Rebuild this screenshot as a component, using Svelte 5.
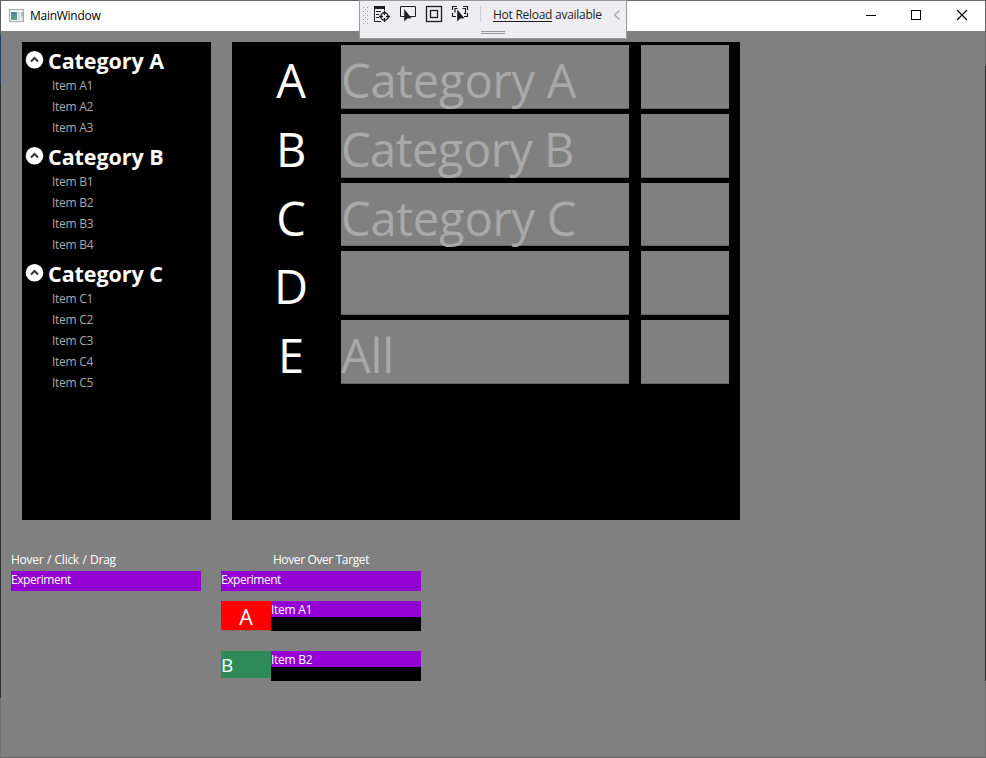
<script>
  const categories = [
    { name: 'Category A', items: ['Item A1', 'Item A2', 'Item A3'] },
    { name: 'Category B', items: ['Item B1', 'Item B2', 'Item B3', 'Item B4'] },
    { name: 'Category C', items: ['Item C1', 'Item C2', 'Item C3', 'Item C4', 'Item C5'] }
  ];
  const slots = [
    { key: 'A', label: 'Category A' },
    { key: 'B', label: 'Category B', tight: true },
    { key: 'C', label: 'Category C' },
    { key: 'D', label: '' },
    { key: 'E', label: 'All' }
  ];
</script>

<div class="window">
  <header class="titlebar">
    <svg class="appicon" width="16" height="14" viewBox="0 0 16 14">
      <defs>
        <linearGradient id="pane" x1="0" y1="0" x2="0.4" y2="1">
          <stop offset="0" stop-color="#4a7fa8" />
          <stop offset="1" stop-color="#58a878" />
        </linearGradient>
      </defs>
      <rect x="0.5" y="0.5" width="14" height="12" fill="#f4f5f7" stroke="#a3a9b2" />
      <rect x="2" y="3" width="6" height="8" fill="url(#pane)" />
      <rect x="9" y="3" width="2" height="8" fill="#d5dbe2" />
      <rect x="12" y="3" width="2" height="4" fill="#9dbccb" />
      <rect x="12" y="7" width="2" height="4" fill="#d5dbe2" />
    </svg>
    <span class="title">MainWindow</span>
    <div class="controls">
      <svg width="46" height="30" viewBox="0 0 46 30"><path d="M18 14.5h10" stroke="#000" /></svg>
      <svg width="46" height="30" viewBox="0 0 46 30"><rect x="17.5" y="9.5" width="9" height="9" fill="none" stroke="#000" /></svg>
      <svg width="46" height="30" viewBox="0 0 46 30"><path d="M17 9l10 10M27 9L17 19" stroke="#000" stroke-width="1.1" /></svg>
    </div>
  </header>

  <main>
    <div class="top">
      <section class="tree">
        {#each categories as cat}
          <div class="head">
            <svg width="19" height="19" viewBox="0 0 19 19">
              <circle cx="9.5" cy="9.8" r="8.8" fill="#fff" />
              <path d="M6 11.500l3.500-3.500 3.500 3.500" fill="none" stroke="#333" stroke-width="2" />
            </svg>
            <span>{cat.name}</span>
          </div>
          {#each cat.items as item}
            <div class="item">{item}</div>
          {/each}
        {/each}
      </section>

      <section class="slots">
        {#each slots as slot}
          <div class="row">
            <div class="key">{slot.key}</div>
            <div class="cell wide" class:tight={slot.tight}>{slot.label}</div>
            <div class="cell small"></div>
          </div>
        {/each}
      </section>
    </div>

    <div class="bottom">
      <div class="source">
        <div class="caption spaced">Hover / Click / Drag</div>
        <div class="exp">Experiment</div>
      </div>
      <div class="target">
        <div class="caption center">Hover Over Target</div>
        <div class="exp">Experiment</div>
        <div class="drop">
          <div class="tag red">A</div>
          <div class="body"><div>Item A1</div></div>
        </div>
        <div class="drop">
          <div class="tag green">B</div>
          <div class="body"><div>Item B2</div></div>
        </div>
      </div>
    </div>
  </main>

  <div class="debugbar">
    <svg class="tools" width="132" height="29" viewBox="0 0 132 29">
      <g fill="#9a9aa0">
        {#each [6, 10, 14, 18, 22] as y}
          <rect x="3" {y} width="1" height="1" /><rect x="7" {y} width="1" height="1" />
          {#if y < 22}<rect x="5" y={y + 2} width="1" height="1" />{/if}
        {/each}
      </g>
      <g fill="none" stroke="#1e1e1e">
        <path d="M14 5h11v3H14z" fill="#1e1e1e" stroke="none" />
        <path d="M14.500 7v13.500H21M24.500 7v2.500M16 10.500h5M16 13.500h3M16 16.500h3" />
        <circle cx="24.500" cy="15.500" r="3.700" stroke-width="1.400" />
        <path d="M24.500 10v4M24.500 17v4M19 15.500h4M26 15.500h4" stroke-width="1.300" />
        <path d="M45 15.500H40.500V5.500h15v10H50" />
        <path d="M44.200 8v12.500l3-3 4.300-.3z" fill="#1e1e1e" stroke="none" />
        <rect x="66.500" y="5.500" width="15" height="15" stroke-width="1.300" />
        <rect x="70.500" y="9.500" width="7" height="7" stroke-width="1.300" />
        <path d="M92.500 9V5.500H97M103 5.500h4.500V9M92.500 12v3.500H96M107.500 12v3.500H104" stroke-width="1.200" />
        <path d="M95 11.500V7.500h2.500M102.500 7.500h3v5H104" stroke-width="1.200" />
        <path d="M97.200 8.500v12l3-3 4.300-.3z" fill="#1e1e1e" stroke="none" />
      </g>
      <path d="M120.500 5v16" stroke="#cccedb" />
    </svg>
    <div class="reload"><u>Hot Reload</u> available</div>
    <svg class="chev" width="8" height="29" viewBox="0 0 8 29"><path d="M6.500 9.500L1.500 14l5 4.500" fill="none" stroke="#a5a5a8" stroke-width="1.200" /></svg>
    <div class="grip"></div>
  </div>
</div>

<style>
  :global(body) { margin: 0; }
  .window {
    position: relative;
    box-sizing: border-box;
    width: 986px;
    height: 758px;
    padding: 1px;
    background:
      linear-gradient(#5b5b5b 0 35px, #1d4266 35px 83px, #303030 83px 698px, #707070 698px) 0 0 / 1px 757px no-repeat,
      linear-gradient(#666 0 66px, #2b2b2b 66px 681px, #6e6e6e 681px) 985px 0 / 1px 757px no-repeat,
      #666;
    font: 12px/16px "Open Sans", "Noto Sans", sans-serif;
    letter-spacing: -0.27px;
    color: #fff;
    overflow: hidden;
  }
  .titlebar {
    display: flex;
    align-items: center;
    height: 30px;
    padding-left: 8px;
    background: #fff;
    color: #000;
  }
  .title { margin-left: 5px; }
  .controls { display: flex; margin-left: auto; margin-right: -1px; }
  main { height: 726px; background: #808080; }
  .top { display: flex; gap: 21px; padding: 11px 0 0 21px; }
  .tree, .slots {
    box-sizing: border-box;
    height: 478px;
    background: #000;
    box-shadow: 0 0 0 1px #7a8087;
  }
  .tree { width: 189px; }
  .head {
    display: flex;
    height: 33px;
    padding-left: 3px;
    font: bold 21.5px/29px "Open Sans", "Noto Sans", sans-serif;
    letter-spacing: -0.07px;
  }
  .head svg { margin-top: 8px; }
  .head span { margin: 4px 0 0 4px; white-space: nowrap; }
  .item { height: 21px; padding-left: 30px; line-height: 21px; color: #a9a9a9; }
  .slots { width: 508px; padding: 3px 0 0 9px; }
  .row {
    display: flex;
    height: 63.84px;
    margin-bottom: 5px;
    font-size: 47px;
    line-height: 70px;
    letter-spacing: -0.2px;
  }
  .key { width: 100px; text-align: center; }
  .cell { background: #808080; color: #a9a9a9; box-shadow: inset 0 -1px #666; white-space: nowrap; }
  .wide { width: 288px; margin-right: 12px; }
  .tight { letter-spacing: -0.5px; }
  .small { width: 88px; }
  .bottom { display: flex; gap: 20px; padding: 32px 0 0 10px; }
  .source { width: 190px; }
  .target { width: 200px; }
  .caption { height: 19px; }
  .spaced { word-spacing: 0.7px; }
  .center { text-align: center; letter-spacing: -0.38px; }
  .exp { height: 20px; background: #9400d3; line-height: 18px; letter-spacing: -0.45px; }
  .drop { display: flex; align-items: flex-start; height: 30px; margin: 10px 0 20px; }
  .tag { width: 50px; font-size: 21.5px; }
  .red { height: 29px; background: #f00; text-align: center; line-height: 31px; border-bottom: 1px solid #8b6a6a; }
  .green { height: 27px; background: #2e8b57; font-size: 19px; line-height: 29px; }
  .body { width: 150px; height: 30px; background: #000; }
  .body div { height: 16px; background: #9400d3; line-height: 18px; }
  .debugbar {
    position: absolute;
    left: 359px;
    top: 0;
    display: flex;
    box-sizing: border-box;
    width: 268px;
    height: 39px;
    border: 1px solid #999;
    background: #eeeef2;
    color: #1e1e1e;
  }
  .reload { margin: 6px 0 0 1px; width: 120px; white-space: nowrap; }
  .reload u { text-underline-offset: 2px; }
  .grip {
    position: absolute;
    left: 121px;
    top: 30px;
    width: 24px;
    height: 1px;
    border: solid #999;
    border-width: 1px 0;
  }
</style>
